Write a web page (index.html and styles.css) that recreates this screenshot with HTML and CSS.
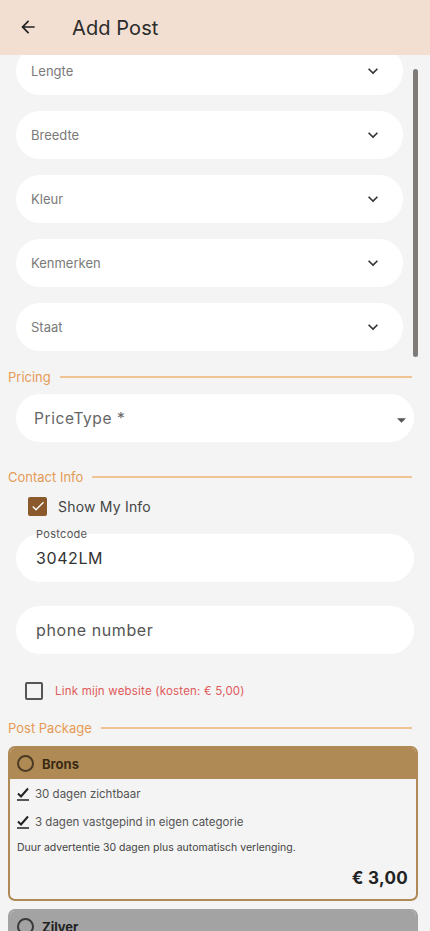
FILE: index.html
```html
<!DOCTYPE html>
<html lang="nl">
<head>
<meta charset="utf-8">
<title>Add Post</title>
<link rel="stylesheet" href="styles.css">
</head>
<body>
<header class="appbar">
  <svg class="back" width="20" height="20" viewBox="0 0 24 24"><path d="M20 11H7.83l5.59-5.59L12 4l-8 8 8 8 1.41-1.41L7.83 13H20v-2z" fill="#222"/></svg>
  <h1 class="title">Add Post</h1>
</header>

<div class="panel">
  <div class="panel-list">
    <div class="select"><span>Lengte</span><svg class="chev" viewBox="0 0 24 24"><path d="M7.41 8.59 12 13.17l4.59-4.58L18 10l-6 6-6-6z" fill="#333"/></svg></div>
    <div class="select"><span>Breedte</span><svg class="chev" viewBox="0 0 24 24"><path d="M7.41 8.59 12 13.17l4.59-4.58L18 10l-6 6-6-6z" fill="#333"/></svg></div>
    <div class="select"><span>Kleur</span><svg class="chev" viewBox="0 0 24 24"><path d="M7.41 8.59 12 13.17l4.59-4.58L18 10l-6 6-6-6z" fill="#333"/></svg></div>
    <div class="select"><span>Kenmerken</span><svg class="chev" viewBox="0 0 24 24"><path d="M7.41 8.59 12 13.17l4.59-4.58L18 10l-6 6-6-6z" fill="#333"/></svg></div>
    <div class="select"><span>Staat</span><svg class="chev" viewBox="0 0 24 24"><path d="M7.41 8.59 12 13.17l4.59-4.58L18 10l-6 6-6-6z" fill="#333"/></svg></div>
  </div>
  <div class="scrollbar"></div>
</div>

<div class="section-title sec-pricing"><span>Pricing</span><i class="rule"></i></div>
<div class="field pricetype"><span>PriceType *</span><svg class="tri" viewBox="0 0 10 5"><path d="M0 0h10L5 5z" fill="#555"/></svg></div>

<div class="section-title sec-contact"><span>Contact Info</span><i class="rule"></i></div>
<div class="check-row">
  <span class="cb checked"><svg viewBox="0 0 24 24"><path d="M9 16.17 4.83 12l-1.42 1.41L9 19 21 7l-1.41-1.41z" fill="#fff"/></svg></span>
  <span class="check-label">Show My Info</span>
</div>
<div class="field postcode">
  <span class="float-label">Postcode</span>
  <span class="value">3042LM</span>
</div>
<div class="field phone"><span class="hint">phone number</span></div>

<div class="link-row">
  <span class="cb empty"></span>
  <span class="link-label">Link mijn website (kosten: € 5,00)</span>
</div>

<div class="section-title sec-package"><span>Post Package</span><i class="rule"></i></div>

<div class="card brons">
  <div class="card-head"><span class="radio"></span><span class="card-name">Brons</span></div>
  <div class="card-body">
    <div class="feat"><svg class="tick" viewBox="0 0 12 14"><path d="M1 6.5 4 9.5 11 1.5" stroke="#222" stroke-width="2" fill="none"/><path d="M0 13h12" stroke="#222" stroke-width="1.6"/></svg><span>30 dagen zichtbaar</span></div>
    <div class="feat"><svg class="tick" viewBox="0 0 12 14"><path d="M1 6.5 4 9.5 11 1.5" stroke="#222" stroke-width="2" fill="none"/><path d="M0 13h12" stroke="#222" stroke-width="1.6"/></svg><span>3 dagen vastgepind in eigen categorie</span></div>
    <div class="desc">Duur advertentie 30 dagen plus automatisch verlenging.</div>
    <div class="price">€ 3,00</div>
  </div>
</div>

<div class="card zilver">
  <div class="card-head"><span class="radio"></span><span class="card-name">Zilver</span></div>
</div>
</body>
</html>
```

FILE: styles.css
```css
html, body {
  margin: 0;
  padding: 0;
}
body {
  background: #f4f4f4;
  font-family: Inter, "Noto Sans", sans-serif;
  width: 430px;
  height: 931px;
  overflow: hidden;
  position: relative;
}

.appbar {
  height: 55px;
  background: #f2dfd2;
  display: flex;
  align-items: center;
  padding-left: 18px;
  box-sizing: border-box;
  position: relative;
  z-index: 2;
}
.back {
  width: 20px;
  height: 20px;
  margin-top: -1px;
}
.title {
  margin: 0 0 0 34px;
  font-size: 20px;
  font-weight: 400;
  color: #2b2b2b;
  letter-spacing: 0.1px;
}

.panel {
  height: 302px;
  position: relative;
  overflow: hidden;
}
.panel-list {
  display: flex;
  flex-direction: column;
  gap: 16px;
  margin-top: -8px;
  padding: 0 27px 0 16px;
}
.select {
  height: 48px;
  background: #fff;
  border-radius: 24px;
  display: flex;
  align-items: center;
  justify-content: space-between;
  padding: 0 20px 0 15px;
  font-size: 13px;
  color: #7a7a7a;
}
.chev {
  width: 20px;
  height: 20px;
}
.scrollbar {
  position: absolute;
  right: 12px;
  top: 14px;
  bottom: 0;
  width: 5px;
  border-radius: 3px;
  background: #7e7b79;
}

.section-title {
  display: flex;
  align-items: center;
  height: 20px;
  padding: 0 18px 0 8px;
  font-size: 13px;
  color: #e59a56;
}
.section-title .rule {
  flex: 1;
  height: 2px;
  background: #f0c393;
  margin-left: 9px;
}
.sec-pricing { margin-top: 10px; }
.sec-contact { margin-top: 25px; }
.sec-package { margin-top: 17px; }

.field {
  height: 48px;
  margin: 0 16px;
  background: #fff;
  border-radius: 24px;
  display: flex;
  align-items: center;
  box-sizing: border-box;
  position: relative;
}
.pricetype {
  margin-top: 7px;
  padding: 0 8px 0 18px;
  justify-content: space-between;
  font-size: 15.5px;
  color: #666;
  letter-spacing: 0.6px;
}
.tri {
  width: 9px;
  height: 5px;
  margin-top: 4px;
}

.check-row {
  display: flex;
  align-items: center;
  height: 20px;
  margin-top: 9px;
  padding-left: 28px;
}
.cb {
  box-sizing: border-box;
  display: inline-flex;
  align-items: center;
  justify-content: center;
  border-radius: 2px;
}
.cb.checked {
  width: 19px;
  height: 19px;
  background: #8a5a2c;
}
.cb.checked svg {
  width: 16px;
  height: 16px;
}
.check-label {
  margin-left: 11px;
  font-size: 14px;
  color: #444;
  letter-spacing: 0.2px;
}

.postcode {
  margin-top: 18px;
  padding-left: 20px;
}
.float-label {
  position: absolute;
  left: 20px;
  top: -7px;
  font-size: 11px;
  color: #555;
  letter-spacing: 0.3px;
}
.value {
  font-size: 16px;
  color: #333;
  letter-spacing: 0.6px;
}
.phone {
  margin-top: 24px;
  padding-left: 20px;
}
.hint {
  font-size: 16px;
  color: #555;
  letter-spacing: 0.6px;
}

.link-row {
  display: flex;
  align-items: center;
  height: 20px;
  margin-top: 27px;
  padding-left: 25px;
}
.cb.empty {
  width: 18px;
  height: 18px;
  border: 2px solid #555;
}
.link-label {
  margin-left: 12px;
  font-size: 11.5px;
  color: #e05a5a;
  letter-spacing: 0.2px;
}

.card {
  margin: 8px 12px 0 8px;
  border: 2px solid #b08a54;
  border-radius: 7px;
  overflow: hidden;
  background: #f4f4f4;
}
.card-head {
  height: 31px;
  background: #b08a54;
  display: flex;
  align-items: center;
  padding-left: 7px;
}
.radio {
  width: 17px;
  height: 17px;
  border: 2px solid #4a3a24;
  border-radius: 50%;
  box-sizing: border-box;
}
.card-name {
  margin-left: 8px;
  font-size: 13px;
  font-weight: 700;
  color: #3a2a14;
}
.card-body {
  padding: 1px 8px 11px 7px;
}
.feat {
  display: flex;
  align-items: center;
  height: 28px;
  font-size: 11.5px;
  color: #555;
}
.tick {
  width: 12px;
  height: 14px;
  margin-right: 6px;
}
.desc {
  font-size: 10.5px;
  color: #444;
  margin-top: 5px;
}
.price {
  text-align: right;
  font-size: 17px;
  font-weight: 700;
  color: #222;
  margin-top: 14px;
  letter-spacing: 0.3px;
}

.zilver {
  margin-top: 8px;
  border-color: #a3a3a3;
}
.zilver .card-head {
  background: #a3a3a3;
}
.zilver .radio { border-color: #3a3a3a; }
.zilver .card-name { color: #222; }
```
